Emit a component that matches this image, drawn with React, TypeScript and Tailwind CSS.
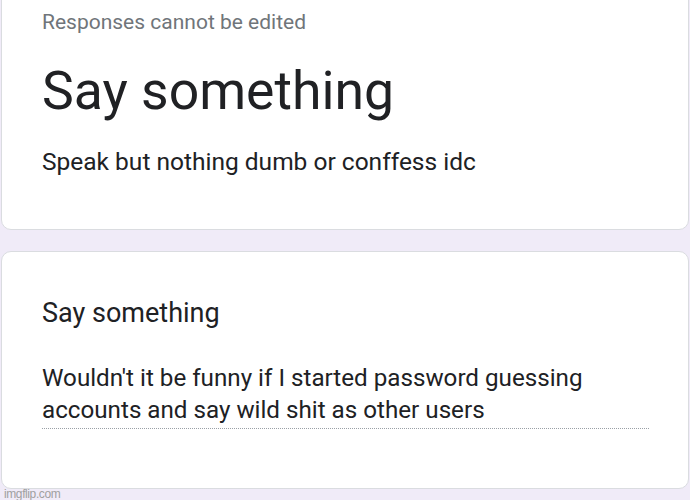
export default function App() {
  return (
    <div
      className="flex h-[500px] w-[690px] flex-col overflow-hidden bg-[#f0ebf8] px-px text-[#202124]"
      style={{ fontFamily: "Roboto, 'Noto Sans', sans-serif" }}
    >
      {/* header card, its top runs off the screen */}
      <section className="-mt-3 rounded-[10px] border border-[#dadce0] bg-white px-[40px] pb-[51px] pt-[20px]">
        <p className="text-[21px] leading-[26px] text-[#70757a]">Responses cannot be edited</p>
        <h1 className="mt-[24px] text-[53.5px] leading-[64px]">Say something</h1>
        <p className="mt-[23px] text-[24.5px] leading-[32px]">Speak but nothing dumb or conffess idc</p>
      </section>

      {/* question card */}
      <section className="mt-[21px] rounded-[10px] border border-[#dadce0] bg-white px-[40px] pb-[59px] pt-[45px]">
        <h2 className="text-[27px] leading-[32px]">Say something</h2>
        <div className="mt-[33px] w-[607px] border-b border-dotted border-[#9aa0a6] pb-[2px] text-[24.2px] leading-[32px]">
          Wouldn't it be funny if I started password guessing accounts and say wild shit as other users
        </div>
      </section>

      <div
        className="-mt-px pl-[3px] text-[12px] leading-[12px] tracking-[-0.4px] text-[#a0a0a0]"
        style={{ fontFamily: "'Liberation Sans Narrow', 'Liberation Sans', Arial, sans-serif" }}
      >
        imgflip.com
      </div>
    </div>
  );
}
